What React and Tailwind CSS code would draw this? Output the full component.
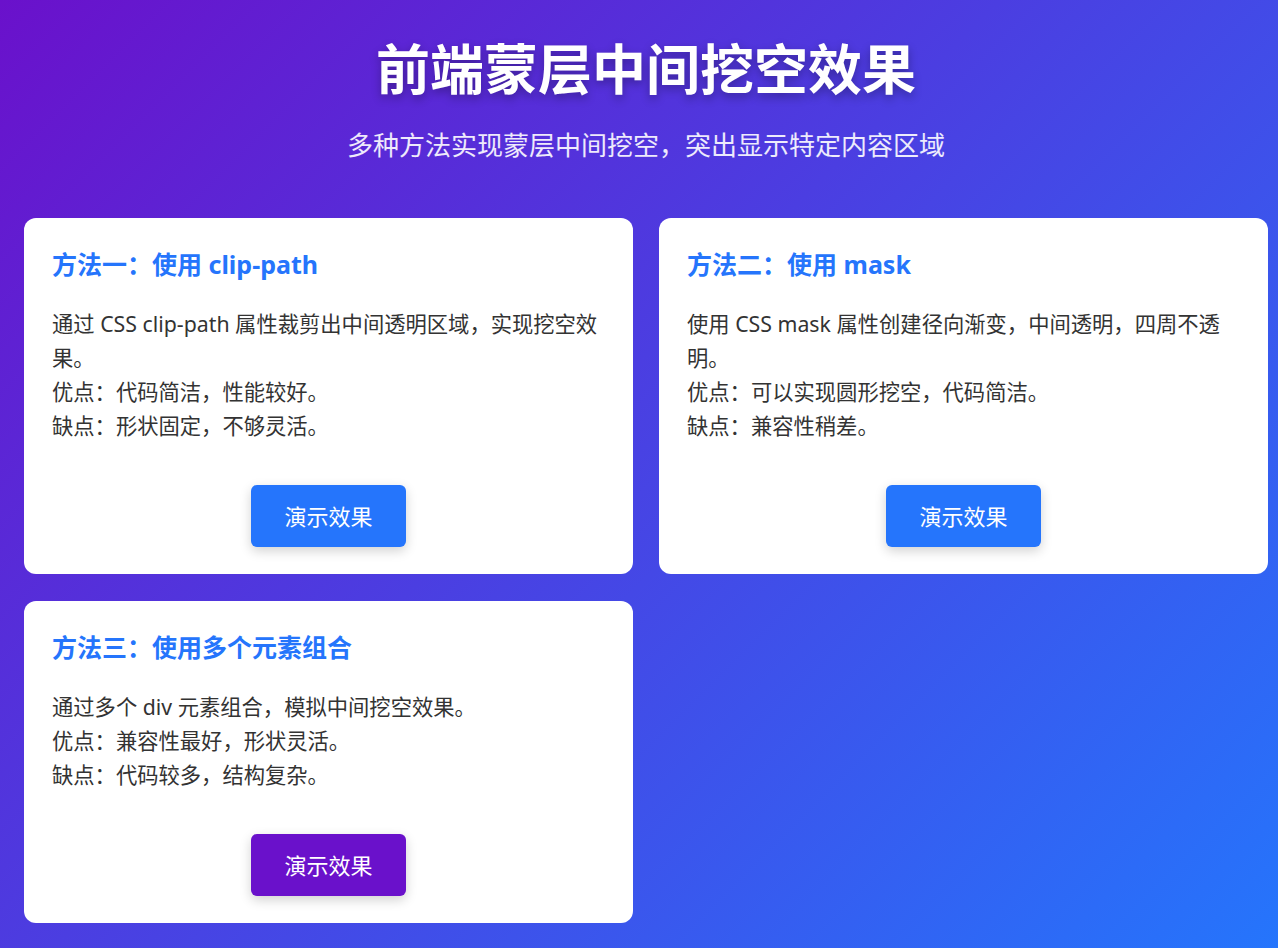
import React from 'react';

const methods = [
  {
    title: '方法一：使用 clip-path',
    lines: ['通过 CSS clip-path 属性裁剪出中间透明区域，实现挖空效果。', '优点：代码简洁，性能较好。', '缺点：形状固定，不够灵活。'],
    btn: 'bg-[#2575fc]',
  },
  {
    title: '方法二：使用 mask',
    lines: ['使用 CSS mask 属性创建径向渐变，中间透明，四周不透明。', '优点：可以实现圆形挖空，代码简洁。', '缺点：兼容性稍差。'],
    btn: 'bg-[#2575fc]',
  },
  {
    title: '方法三：使用多个元素组合',
    lines: ['通过多个 div 元素组合，模拟中间挖空效果。', '优点：兼容性最好，形状灵活。', '缺点：代码较多，结构复杂。'],
    btn: 'bg-[#6a11cb]',
  },
];

const App = () => {
  return (
    <div className="min-h-[948px] bg-[linear-gradient(135deg,#6a11cb_0%,#2575fc_100%)] pt-[36px] pb-[25px] pl-[24px] pr-[10px] font-['Noto_Sans','Noto_Sans_CJK_SC',sans-serif]">
      <header className="text-center text-white">
        <h1 className="text-[54px] font-bold leading-[66px] [text-shadow:0_4px_10px_rgba(0,0,0,0.3)]">
          前端蒙层中间挖空效果
        </h1>
        <p className="mt-[24px] text-[26px] leading-[39px] text-white/90">
          多种方法实现蒙层中间挖空，突出显示特定内容区域
        </p>
      </header>

      <div className="mt-[53px] grid grid-cols-2 gap-x-[26px] gap-y-[27px]">
        {methods.map((m) => (
          <div key={m.title} className="bg-white rounded-[12px] px-[28px] pt-[28px] pb-[27px] flex flex-col">
            <h3 className="text-[25px] font-bold leading-[36px] text-[#2575fc]">{m.title}</h3>
            <p className="mt-[25px] text-[21.3px] leading-[34px] text-[#333]">
              {m.lines.map((l, i) => (
                <React.Fragment key={i}>
                  {i > 0 && <br />}
                  {l}
                </React.Fragment>
              ))}
            </p>
            <div className="mt-auto pt-[42px] flex justify-center">
              <button className={`${m.btn} text-white text-[22px] leading-[32px] px-[33px] py-[15px] rounded-[6px] shadow-[0_4px_12px_rgba(0,0,0,0.18)]`}>
                演示效果
              </button>
            </div>
          </div>
        ))}
      </div>
    </div>
  );
};

export default App;
